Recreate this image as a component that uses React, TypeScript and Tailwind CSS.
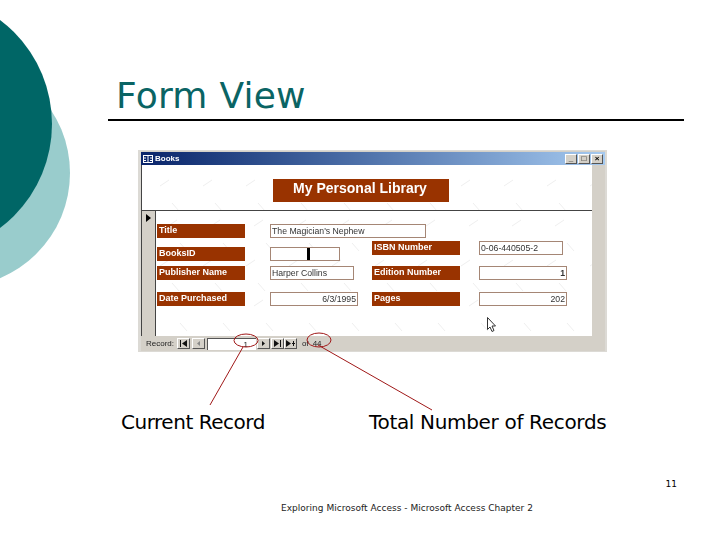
const sans = "font-['Liberation_Sans',Arial,sans-serif]";
const dv = "font-['DejaVu_Sans',Verdana,sans-serif]";

function Label({ text, className = "" }: { text: string; className?: string }) {
  return (
    <div className={`w-[88px] h-[14px] bg-[#993300] text-white font-bold text-[9px] leading-[13px] pl-[2px] ${className}`}>
      {text}
    </div>
  );
}

function Field({ text, w, right, className = "" }: { text?: string; w: string; right?: boolean; className?: string }) {
  return (
    <div className={`${w} h-[14px] bg-white border border-[#a58675] text-[#333] text-[8.7px] leading-[12px] px-[1px] whitespace-nowrap ${right ? "text-right" : ""} ${className}`}>
      {text}
    </div>
  );
}

function NavBtn({ children, className = "" }: { children: React.ReactNode; className?: string }) {
  return (
    <div className={`w-[13px] h-[11px] bg-[#d4d0c8] border-t border-l border-white border-r border-b border-r-[#555] border-b-[#555] flex items-center justify-center text-[#111] ${className}`}>
      <svg width="9" height="7" viewBox="0 0 9 7" fill="currentColor">{children}</svg>
    </div>
  );
}

function Texture() {
  const marks: React.ReactNode[] = [];
  for (let r = 0; r < 5; r++) {
    for (let c = 0; c < 11; c++) {
      const x = 18 + c * 43 + (r % 2) * 8;
      const y = 12 + r * 40;
      marks.push(<path key={`${r}-${c}`} d={`M${x} ${y + 9}l9 -6M${x + 12} ${y + 26}l7 8`} stroke="#efefef" strokeWidth="1" fill="none" />);
    }
  }
  return <svg className="absolute inset-0 w-full h-full" aria-hidden="true">{marks}</svg>;
}

function FormWindow() {
  return (
    <div className={`ml-[138px] mt-[29px] w-[469px] h-[202px] bg-[#d4d0c8] border-t border-l-[3px] border-r-2 border-b border-[#dcdad5] flex flex-col blur-[0.3px] ${sans}`}>
      <div className="h-[13px] shrink-0 bg-gradient-to-r from-[#0a246a] to-[#a6caf0] flex items-center pl-[2px] pr-[3px] gap-[2px] mt-px">
        <svg width="10" height="8" viewBox="0 0 10 8" fill="none" stroke="#fff" strokeWidth="1"><rect x="0.5" y="0.5" width="9" height="7" /><path d="M5 0v8M0 3h3M0 5.500h3M7 3h3M7 5.500h3" /></svg>
        <span className="text-white font-bold text-[8px] leading-none">Books</span>
        <div className="ml-auto flex gap-[1px] mr-[-1px]">
          {["_", "□", "×"].map((t) => (
            <div key={t} className="w-[12px] h-[10px] bg-[#d4d0c8] border-t border-l border-white border-r border-b border-r-[#555] border-b-[#555] text-[8px] font-bold leading-[8px] text-center text-black">{t}</div>
          ))}
        </div>
      </div>
      <div className="flex-1 flex min-h-0">
        <div className="w-[451px] bg-white border-l border-[#444] relative overflow-hidden">
          <Texture />
          <div className="relative h-[46px] border-b border-[#444] pt-[14px] pl-[131px]">
            <div className="w-[176px] h-[23px] bg-[#993300] text-white font-bold text-[14px] leading-[18px] text-center pr-[2px]">My Personal Library</div>
          </div>
          <div className="relative flex h-[126px]">
            <div className="w-[14px] shrink-0 bg-[#d4d0c8] border-r border-[#444] pl-[4px] pt-[3px]">
              <svg width="5" height="8" viewBox="0 0 5 8" fill="#000"><path d="M0 0l5 4-5 4z" /></svg>
            </div>
            <div className="pl-[1px] pt-[13px] flex flex-col w-[114px] shrink-0">
              <Label text="Title" />
              <Label text="BooksID" className="mt-[9px]" />
              <Label text="Publisher Name" className="mt-[5px]" />
              <Label text="Date Purchased" className="mt-[12px]" />
            </div>
            <div className="pt-[13px] flex flex-col w-[102px] shrink-0 relative">
              <Field text="The Magician's Nephew" w="w-[156px]" />
              <div className="w-[70px] h-[14px] bg-white border border-[#a58675] mt-[9px] relative">
                <span className="absolute right-[29px] top-0 w-[3px] h-[12px] bg-black" />
              </div>
              <Field text="Harper Collins" w="w-[84px]" className="mt-[5px]" />
              <Field text="6/3/1995" w="w-[88px]" right className="mt-[12px]" />
            </div>
            <div className="pt-[30px] flex flex-col w-[107px] shrink-0">
              <Label text="ISBN Number" />
              <Label text="Edition Number" className="mt-[11px]" />
              <Label text="Pages" className="mt-[12px]" />
            </div>
            <div className="pt-[30px] flex flex-col">
              <Field text="0-06-440505-2" w="w-[84px]" />
              <Field text="1" w="w-[88px]" right className="mt-[11px] font-bold" />
              <Field text="202" w="w-[88px]" right className="mt-[12px]" />
            </div>
          </div>
        </div>
      </div>
      <div className="h-[15px] shrink-0 bg-[#d4d0c8] flex items-center pl-[5px] text-[8px] text-[#222] relative">
        <span className="w-[31px]">Record:</span>
        <NavBtn><path d="M1 0h1v7H1zM8 0v7L3 3.500z" /></NavBtn>
        <NavBtn className="ml-[2px] text-[#888]"><path d="M6 1v5L3 3.500z" /></NavBtn>
        <div className="ml-[2px] w-[49px] h-[12px] bg-white border-t border-l border-[#555] text-right pr-[8px] leading-[11px]">1</div>
        <NavBtn className="ml-[1px]"><path d="M3 1v5l3-2.500z" /></NavBtn>
        <NavBtn className="ml-[1px]"><path d="M1 0v7l5-3.500zM7 0h1v7H7z" /></NavBtn>
        <NavBtn><path d="M0 0v7l5-3.500zM6 3h3v1H6zM7 1h1v5H7z" /></NavBtn>
        <span className="ml-[5px]">of</span>
        <span className="ml-[4px]">44</span>
      </div>
    </div>
  );
}

export default function App() {
  return (
    <div className="relative w-[720px] h-[540px] bg-white overflow-hidden flex flex-col">
      <div className="absolute left-[-158px] top-[59px] w-[228px] h-[228px] rounded-full bg-[#99cccc]" />
      <div className="absolute left-[-208px] top-[-6px] w-[260px] h-[260px] rounded-full bg-[#006666]" />
      <div className="relative ml-[108px] mt-[74px] w-[576px] h-[47px] border-b-2 border-black pl-[8px]">
        <h1 className={`text-[#0a6464] text-[36px] leading-[44px] font-normal tracking-[0.25px] ${dv}`}>Form View</h1>
      </div>
      <div className="relative">
        <FormWindow />
      </div>
      <div className={`relative flex text-black text-[20px] leading-[24px] mt-[58px] ${dv}`}>
        <span className="ml-[121px] w-[248px] tracking-[-0.48px]">Current Record</span>
        <span className="tracking-[-0.33px] whitespace-nowrap">Total Number of Records</span>
      </div>
      <div className={`relative text-right pr-[43px] mt-[44px] text-[9px] leading-[12px] text-black ${dv}`}>11</div>
      <div className={`relative ml-[281px] mt-[12px] text-[9px] leading-[12px] text-[#222] whitespace-nowrap tracking-[0.02px] ${dv}`}>
        Exploring Microsoft Access - Microsoft Access Chapter 2
      </div>
      <svg className="absolute inset-0 w-[720px] h-[540px]" fill="none" stroke="#a01818" strokeWidth="1" aria-hidden="true">
        <ellipse cx="246" cy="340.5" rx="12" ry="6.5" />
        <ellipse cx="319" cy="340" rx="12" ry="7" />
        <path d="M243 347L210 405M318 345L432 410" />
        <path d="M487.500 317.500v12l2.500-2.500 2 4.500 2-1-2-4.500h3.500z" fill="#fff" stroke="#333" />
      </svg>
    </div>
  );
}
